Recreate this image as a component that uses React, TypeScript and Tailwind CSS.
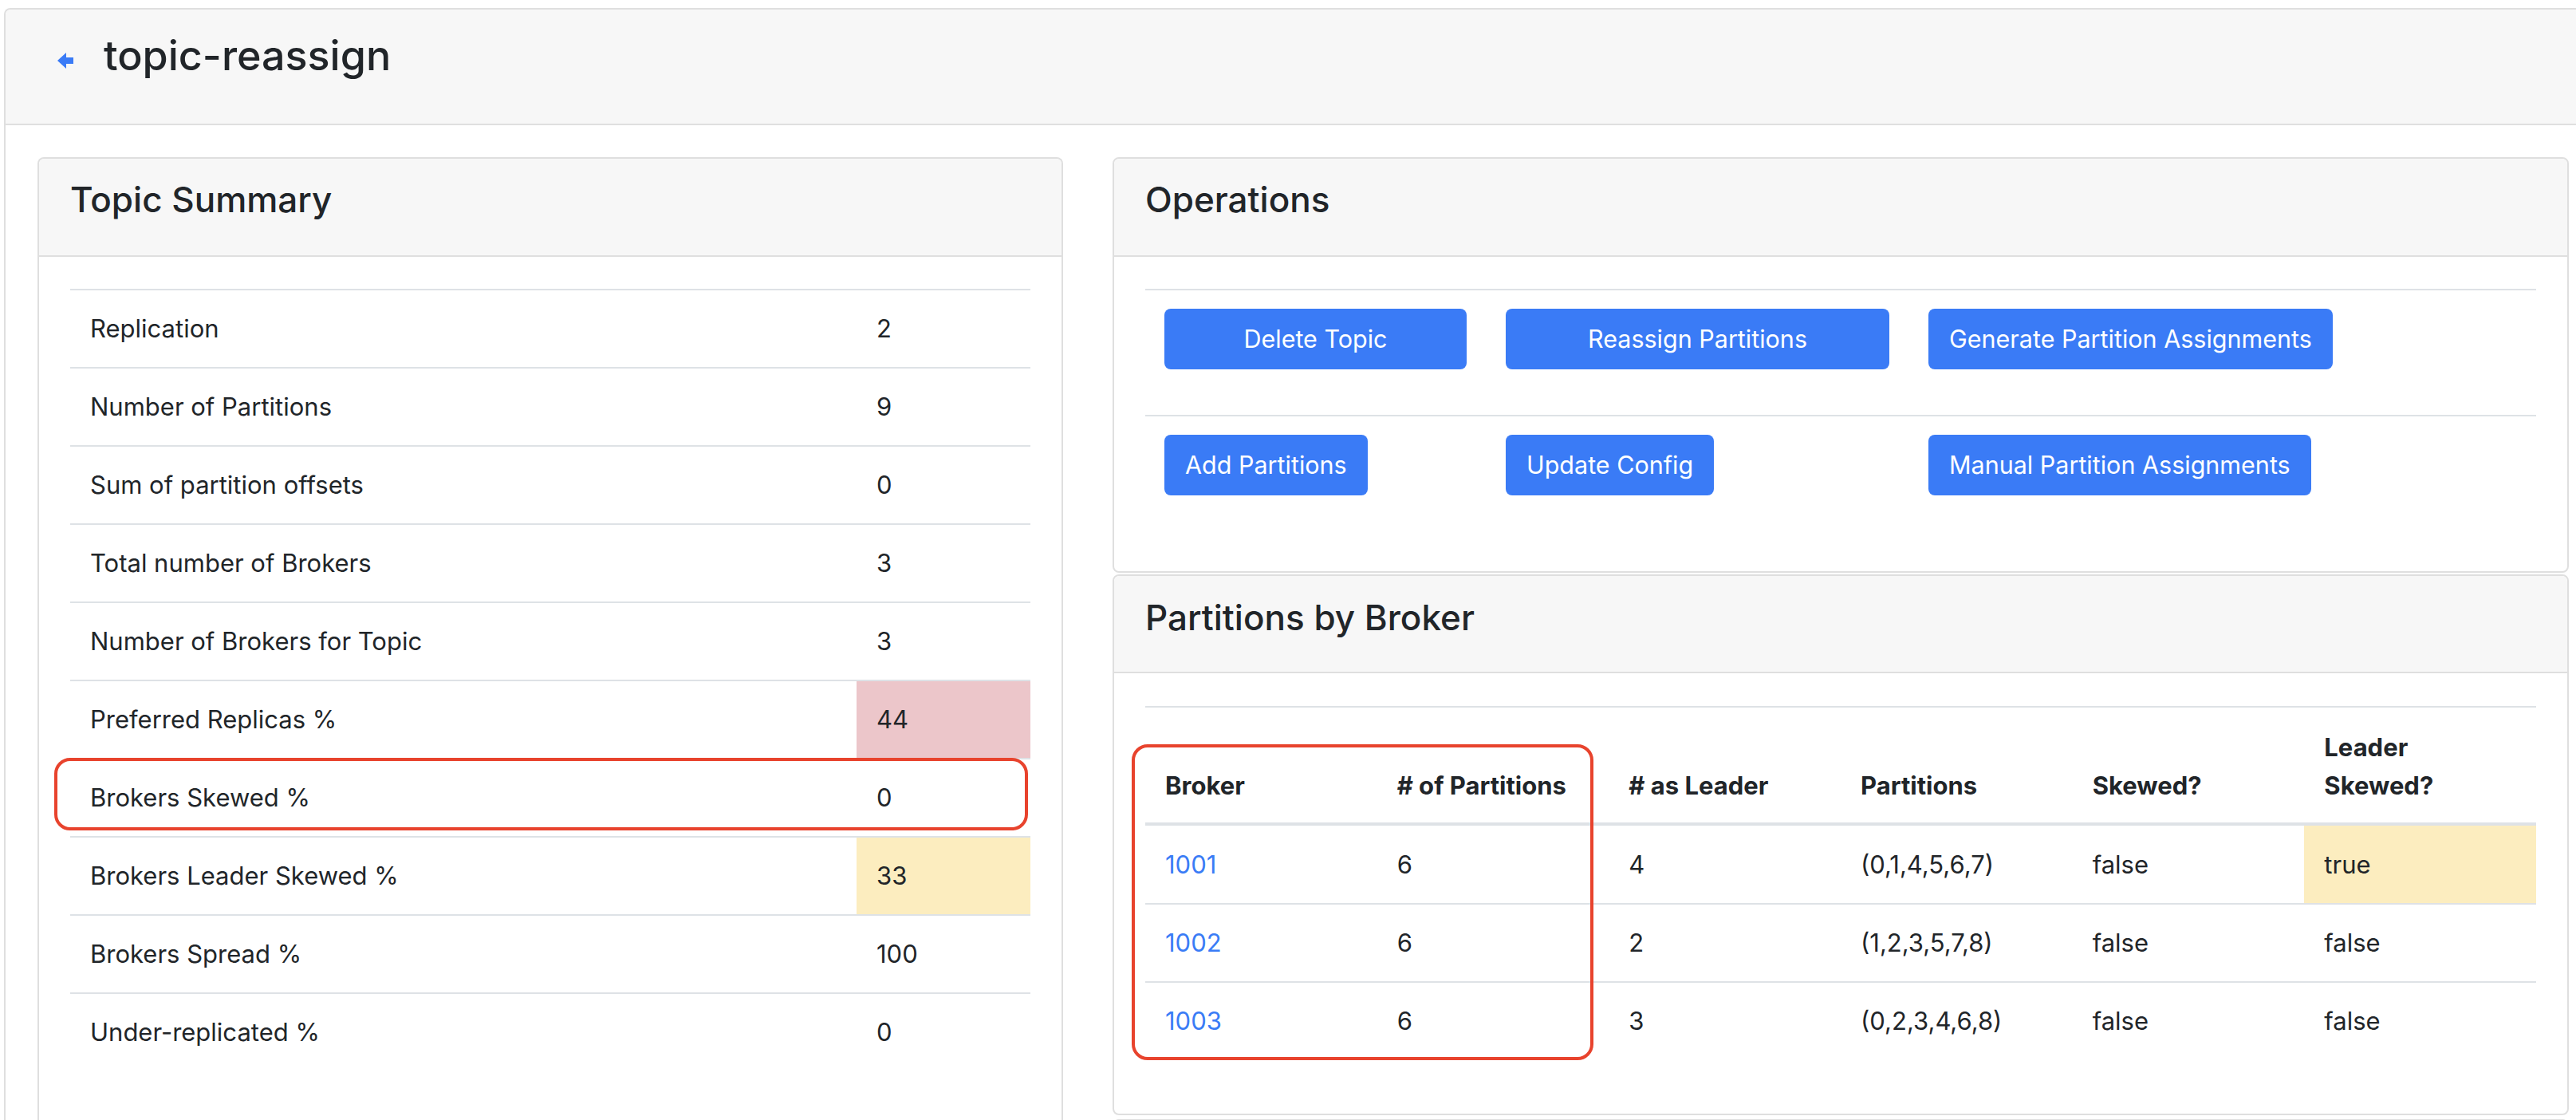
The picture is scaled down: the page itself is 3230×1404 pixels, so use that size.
import React from "react";

const summaryRows: Array<{ label: string; value: string; tone?: "danger" | "warning" }> = [
  { label: "Replication", value: "2" },
  { label: "Number of Partitions", value: "9" },
  { label: "Sum of partition offsets", value: "0" },
  { label: "Total number of Brokers", value: "3" },
  { label: "Number of Brokers for Topic", value: "3" },
  { label: "Preferred Replicas %", value: "44", tone: "danger" },
  { label: "Brokers Skewed %", value: "0" },
  { label: "Brokers Leader Skewed %", value: "33", tone: "warning" },
  { label: "Brokers Spread %", value: "100" },
  { label: "Under-replicated %", value: "0" },
];

const brokers = [
  { id: "1001", count: "6", leader: "4", partitions: "(0,1,4,5,6,7)", skewed: "false", leaderSkewed: "true" },
  { id: "1002", count: "6", leader: "2", partitions: "(1,2,3,5,7,8)", skewed: "false", leaderSkewed: "false" },
  { id: "1003", count: "6", leader: "3", partitions: "(0,2,3,4,6,8)", skewed: "false", leaderSkewed: "false" },
];

function BackArrow() {
  return (
    <svg width="20" height="20" viewBox="0 0 20 20" className="mt-[54px] shrink-0">
      <path d="M0 10 L11 0 L11 6 L20 6 L20 14 L11 14 L11 20 Z" fill="#3a7bf6" />
    </svg>
  );
}

function CardHeader({ title, h = "h-[123px]", pt = "pt-[25px]" }: { title: string; h?: string; pt?: string }) {
  return (
    <div className={`${h} ${pt} pl-[39px] bg-[#f7f7f7] border-b-2 border-[#dfdfdf] rounded-t-[7px]`}>
      <h4 className="text-[44px] leading-[1.2] font-medium">{title}</h4>
    </div>
  );
}

function Btn({ children, w }: { children: React.ReactNode; w?: string }) {
  return (
    <button
      className={`${w ?? "px-[26px]"} h-[76px] rounded-[8px] bg-[#3a7bf6] text-white text-[30.5px] leading-[48px] flex items-center justify-center`}
    >
      {children}
    </button>
  );
}

function TopicSummary() {
  return (
    <div className="relative w-[1286px] shrink-0 border-2 border-b-0 border-[#dfdfdf] rounded-t-[8px]">
      <CardHeader title="Topic Summary" />
      <div className="px-[39px] pt-[40px] pb-[72px]">
        {summaryRows.map((r) => (
          <div key={r.label} className="flex h-[98px] border-t-2 border-[#dee2e6]">
            <div className="flex-1 pl-[25px] flex items-center">{r.label}</div>
            <div
              className={`w-[218px] pl-[25px] flex items-center ${
                r.tone === "danger" ? "bg-[#ecc6ca]" : r.tone === "warning" ? "bg-[#fcedbf]" : ""
              }`}
            >
              {r.value}
            </div>
          </div>
        ))}
      </div>
      <div className="absolute left-[19px] top-[751px] w-[1221px] h-[91px] border-4 border-[#e8432d] rounded-[20px]" />
    </div>
  );
}

function Operations() {
  return (
    <div className="border-2 border-[#dfdfdf] rounded-[8px]">
      <CardHeader title="Operations" />
      <div className="px-[39px] pt-[40px] pb-[38px]">
        <div className="h-[158px] border-t-2 border-[#dee2e6] pt-[23px] pl-[24px] grid grid-cols-[428px_530px_1fr] items-start">
          <Btn w="w-[379px]">Delete Topic</Btn>
          <Btn w="w-[481px]">Reassign Partitions</Btn>
          <div className="flex">
            <Btn>Generate Partition Assignments</Btn>
          </div>
        </div>
        <div className="h-[158px] border-t-2 border-[#dee2e6] pt-[23px] pl-[24px] grid grid-cols-[428px_530px_1fr] items-start">
          <div className="flex">
            <Btn>Add Partitions</Btn>
          </div>
          <div className="flex">
            <Btn>Update Config</Btn>
          </div>
          <div className="flex">
            <Btn>Manual Partition Assignments</Btn>
          </div>
        </div>
      </div>
    </div>
  );
}

function PartitionsByBroker() {
  return (
    <div className="relative mt-[2px] border-2 border-[#dfdfdf] rounded-[8px]">
      <CardHeader title="Partitions by Broker" h="h-[122px]" pt="pt-[26px]" />
      <div className="px-[39px] pt-[41px] pb-[68px]">
        <div className="grid grid-cols-6 items-end border-t-2 border-b-4 border-[#dee2e6] pt-[26px] pb-[22px] font-bold">
          <div className="pl-[25px]">Broker</div>
          <div className="pl-[25px]"># of Partitions</div>
          <div className="pl-[25px]"># as Leader</div>
          <div className="pl-[25px]">Partitions</div>
          <div className="pl-[25px]">Skewed?</div>
          <div className="pl-[25px]">
            Leader
            <br />
            Skewed?
          </div>
        </div>
        {brokers.map((b, i) => (
          <div
            key={b.id}
            className={`grid grid-cols-6 ${i === 0 ? "h-[97px]" : "h-[98px] border-t-2 border-[#dee2e6]"}`}
          >
            <div className="pl-[25px] flex items-center text-[#3a7cf6]">{b.id}</div>
            <div className="pl-[25px] flex items-center">{b.count}</div>
            <div className="pl-[25px] flex items-center">{b.leader}</div>
            <div className="pl-[25px] flex items-center">{b.partitions}</div>
            <div className="pl-[25px] flex items-center">{b.skewed}</div>
            <div className={`pl-[25px] flex items-center ${b.leaderSkewed === "true" ? "bg-[#fcedbf]" : ""}`}>
              {b.leaderSkewed}
            </div>
          </div>
        ))}
      </div>
      <div className="absolute left-[22px] top-[211px] w-[579px] h-[396px] border-4 border-[#e8432d] rounded-[20px]" />
    </div>
  );
}

export default function App() {
  return (
    <div className="h-screen w-screen overflow-hidden bg-white pl-[5px] pt-[10px] font-['Inter','Liberation_Sans',sans-serif] text-[31px] leading-[48px] text-[#212529]">
      <div className="w-[3300px] border-2 border-r-0 border-b-0 border-[#dfdfdf] rounded-tl-[8px]">
        <div className="h-[145px] bg-[#f7f7f7] border-b-2 border-[#dfdfdf] rounded-tl-[7px] pl-[65px] flex items-start gap-[38px]">
          <BackArrow />
          <h3 className="pt-[27px] text-[52px] leading-[1.2] font-medium">topic-reassign</h3>
        </div>
        <div className="flex gap-[62px] pl-[40px] pt-[40px]">
          <TopicSummary />
          <div className="w-[1826px] shrink-0">
            <Operations />
            <PartitionsByBroker />
            <div className="mt-[5px] h-[60px] border-2 border-[#dfdfdf] rounded-[8px]" />
          </div>
        </div>
      </div>
    </div>
  );
}
